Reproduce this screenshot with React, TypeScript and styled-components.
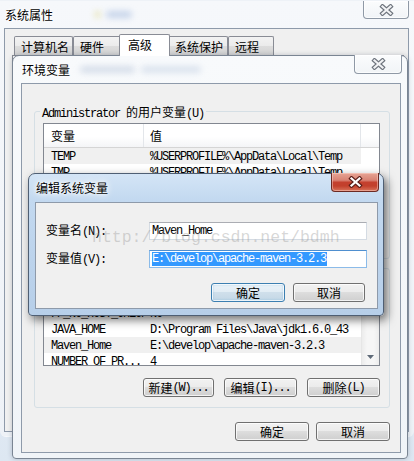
import React from "react";
import styled, { createGlobalStyle, css } from "styled-components";

const GlobalStyle = createGlobalStyle`
  html, body { margin: 0; padding: 0; }
  body {
    width: 414px; height: 461px; overflow: hidden;
    font-family: "Noto Sans CJK SC", "Liberation Sans", sans-serif;
    font-size: 12px; color: #000;
  }
`;

const Desktop = styled.div`
  position: relative;
  width: 414px;
  height: 461px;
  overflow: hidden;
  background: linear-gradient(180deg, #f4f7fa 0%, #e9eff6 60%, #dde7f2 100%);
`;

const Lat = styled.span`
  font-family: "Liberation Mono", monospace;
  font-size: 12px;
  letter-spacing: -1.2px;
`;

/* ---------- window chrome ---------- */

const Window = styled.div<{ $x: number; $y: number; $w: number; $h: number; $active?: boolean; $outer?: boolean }>`
  position: absolute;
  left: ${(p) => p.$x}px;
  top: ${(p) => p.$y}px;
  width: ${(p) => p.$w}px;
  height: ${(p) => p.$h}px;
  box-sizing: border-box;
  display: flex;
  flex-direction: column;
  border: 1px solid ${(p) => (p.$active ? "#4f5f74" : "#7a8593")};
  border-radius: 7px 7px 4px 4px;
  background: ${(p) =>
    p.$active
      ? "linear-gradient(180deg, #d4e5f6 0%, #c3d9f0 18%, #bcd3ec 60%, #b7cfe9 100%)"
      : "linear-gradient(180deg, #f8fafc 0%, #f0f4f8 100%)"};
  box-shadow: ${(p) =>
    p.$active ? "3px 4px 10px rgba(0,0,0,0.55)" : "0 0 5px rgba(40,50,70,0.25)"};
  ${(p) =>
    p.$outer &&
    css`
      border-color: transparent;
      border-radius: 0 0 6px 6px;
      box-shadow: none;
      background: linear-gradient(180deg, #f6f8fb 0%, #eef2f7 100%);
    `}
`;

const TitleBar = styled.div<{ $h: number; $pl: number }>`
  height: ${(p) => p.$h}px;
  flex: none;
  display: flex;
  align-items: center;
  padding-left: ${(p) => p.$pl}px;
`;

const Title = styled.span`
  font-size: 12px;
  line-height: 14px;
  color: #000;
  text-shadow: 0 0 6px #fff, 0 0 3px #fff, 0 0 10px rgba(255, 255, 255, 0.9);
  white-space: nowrap;
`;

const Smudge = styled.span<{ $w: number; $c: string; $ml: number }>`
  display: inline-block;
  width: ${(p) => p.$w}px;
  height: 7px;
  margin-left: ${(p) => p.$ml}px;
  border-radius: 5px;
  background: ${(p) => p.$c};
  opacity: 0.55;
  filter: blur(3px);
`;

const CloseBtn = styled.div<{ $red?: boolean; $w: number; $h: number; $mr: number; $mt: number }>`
  margin-left: auto;
  margin-right: ${(p) => p.$mr}px;
  margin-top: ${(p) => p.$mt}px;
  align-self: flex-start;
  width: ${(p) => p.$w}px;
  height: ${(p) => p.$h}px;
  box-sizing: border-box;
  border-radius: 0 0 4px 4px;
  display: flex;
  align-items: center;
  justify-content: center;
  border: 1px solid #8f99a6;
  border-top: none;
  background: linear-gradient(180deg, #fbfcfd 0%, #f1f4f7 100%);
  box-shadow: inset 0 0 0 1px rgba(255, 255, 255, 0.7);
  ${(p) =>
    p.$red &&
    css`
      border: 1px solid #6c2a23;
      border-top: none;
      background: linear-gradient(
        180deg,
        #e6a595 0%,
        #d98374 40%,
        #c4402e 52%,
        #c2402c 72%,
        #d8735a 100%
      );
      box-shadow: inset 0 0 0 1px rgba(255, 220, 210, 0.45);
    `}
`;

const CloseGlyph: React.FC<{ fill: string; stroke: string }> = ({ fill, stroke }) => (
  <svg width="15" height="12" viewBox="0 0 15 12">
    <path d="M3.5 2.5 L11.5 9.5 M11.5 2.5 L3.5 9.5" stroke={stroke} strokeWidth="4.4" strokeLinecap="square" fill="none" />
    <path d="M3.5 2.5 L11.5 9.5 M11.5 2.5 L3.5 9.5" stroke={fill} strokeWidth="2.2" strokeLinecap="square" fill="none" />
  </svg>
);

const Client = styled.div<{ $m: string }>`
  flex: 1;
  margin: ${(p) => p.$m};
  box-sizing: border-box;
  border: 1px solid #8e9aaa;
  background: #f0f0f0;
  display: flex;
  flex-direction: column;
  min-height: 0;
`;

/* ---------- tabs of the back window ---------- */

const TabStrip = styled.div`
  display: flex;
  align-items: flex-end;
  height: 21px;
  margin-top: 5px;
  padding-left: 9px;
  flex: none;
`;

const Tab = styled.div<{ $w: number; $sel?: boolean }>`
  box-sizing: border-box;
  width: ${(p) => p.$w}px;
  height: 19px;
  padding-left: 6px;
  display: flex;
  align-items: center;
  border: 1px solid #898c95;
  border-bottom: none;
  border-radius: 2px 2px 0 0;
  background: linear-gradient(180deg, #f3f3f3 0%, #ebebeb 50%, #dddddd 51%, #d3d3d3 100%);
  white-space: nowrap;
  ${(p) =>
    p.$sel &&
    css`
      height: 22px;
      margin: 0 -2px -1px -2px;
      padding-left: 8px;
      padding-bottom: 2px;
      background: #fff;
      position: relative;
      z-index: 1;
    `}
`;

const TabPanel = styled.div`
  flex: 1;
  margin: 0 4px 4px 7px;
  border: 1px solid #898c95;
  background: #fcfcfc;
`;

/* ---------- group box, list, buttons ---------- */

const Group = styled.div<{ $mt: number; $pb: number }>`
  position: relative;
  box-sizing: border-box;
  width: 356px;
  margin: ${(p) => p.$mt}px 0 0 12px;
  padding: 11px 9px ${(p) => p.$pb}px 8px;
  border: 1px solid #d5dfe5;
  border-radius: 3px;
  display: flex;
  flex-direction: column;
  flex: none;
`;

const GroupLabel = styled.span`
  position: absolute;
  left: 5px;
  top: -8px;
  padding: 0 2px;
  line-height: 15px;
  background: #f0f0f0;
  white-space: nowrap;
`;

const ListBox = styled.div<{ $h: number }>`
  box-sizing: border-box;
  height: ${(p) => p.$h}px;
  border: 1px solid #828790;
  background: #fff;
  display: flex;
  flex-direction: column;
  overflow: hidden;
  flex: none;
`;

const Header = styled.div`
  box-sizing: border-box;
  display: grid;
  grid-template-columns: 100px 217px 1fr;
  height: 24px;
  flex: none;
  background: linear-gradient(180deg, #ffffff 0%, #ffffff 55%, #f4f5f7 100%);
  border-bottom: 1px solid #d5d5d5;
`;

const HeadCell = styled.div<{ $pl: number; $last?: boolean }>`
  display: flex;
  align-items: center;
  padding-left: ${(p) => p.$pl}px;
  border-right: ${(p) => (p.$last ? "none" : "1px solid #e3e6ea")};
  white-space: nowrap;
`;

const ListBody = styled.div`
  flex: 1;
  display: flex;
  min-height: 0;
`;

const Rows = styled.div`
  flex: 1;
  overflow: hidden;
`;

const Row = styled.div<{ $sel?: boolean }>`
  display: grid;
  grid-template-columns: 100px 217px;
  width: 317px;
  height: 16px;
  align-items: center;
  background: ${(p) => (p.$sel ? "#f0f0f0" : "transparent")};
`;

const Cell = styled.div<{ $pl: number }>`
  padding-left: ${(p) => p.$pl}px;
  white-space: nowrap;
  overflow: hidden;
  font-family: "Liberation Mono", monospace;
  font-size: 12px;
  letter-spacing: -1.2px;
  line-height: 16px;
  padding-top: 1px;
`;

const VScroll = styled.div`
  box-sizing: border-box;
  width: 18px;
  flex: none;
  border-left: 1px solid #e6e6e6;
  background: linear-gradient(90deg, #ececec 0%, #f6f6f6 30%, #f6f6f6 70%, #ececec 100%);
  display: flex;
  flex-direction: column;
  justify-content: flex-end;
  align-items: center;
`;

const ArrowBox = styled.div`
  height: 16px;
  display: flex;
  align-items: center;
  justify-content: center;
`;

const ButtonRow = styled.div<{ $mt: number; $pr: number; $gap: number }>`
  display: flex;
  justify-content: flex-end;
  gap: ${(p) => p.$gap}px;
  margin-top: ${(p) => p.$mt}px;
  padding-right: ${(p) => p.$pr}px;
  flex: none;
`;

const Btn = styled.div<{ $w: number; $def?: boolean }>`
  box-sizing: border-box;
  width: ${(p) => p.$w}px;
  height: 19px;
  display: flex;
  align-items: center;
  justify-content: center;
  border: 1px solid #707070;
  border-radius: 3px;
  background: linear-gradient(180deg, #f2f2f2 0%, #ebebeb 49%, #dddddd 50%, #cfcfcf 100%);
  box-shadow: inset 0 0 0 1px rgba(255, 255, 255, 0.75);
  line-height: 14px;
  white-space: nowrap;
  ${(p) =>
    p.$def &&
    css`
      border-color: #3c7fb1;
      background: linear-gradient(180deg, #ebf3f9 0%, #e1ecf4 49%, #cfdfeb 50%, #c3d7e6 100%);
      box-shadow: inset 0 0 0 1px rgba(255, 255, 255, 0.8), inset 0 0 2px 1px rgba(60, 140, 210, 0.3);
    `}
`;

/* ---------- edit dialog ---------- */

const FormGrid = styled.div`
  display: grid;
  grid-template-columns: 103px 218px;
  row-gap: 8px;
  padding: 18px 0 0 10px;
  align-items: center;
`;

const FieldLabel = styled.div`
  white-space: nowrap;
  line-height: 18px;
`;

const Input = styled.div<{ $focus?: boolean }>`
  box-sizing: border-box;
  height: 18px;
  display: flex;
  align-items: center;
  padding-left: 2px;
  background: #fff;
  border: 1px solid ${(p) => (p.$focus ? "#8bbbe9" : "#d4dbe3")};
  border-top-color: ${(p) => (p.$focus ? "#4f8fcf" : "#abadb3")};
  white-space: nowrap;
  overflow: hidden;
`;

const Selected = styled.span`
  background: #3399ff;
  color: #fff;
  line-height: 14px;
  font-family: "Liberation Mono", monospace;
  font-size: 12px;
  letter-spacing: -1.2px;
  padding-right: 1.2px;
`;

const Watermark = styled.div`
  position: absolute;
  left: 92px;
  top: 229px;
  font-family: "Liberation Mono", monospace;
  font-size: 16.5px;
  line-height: 18px;
  color: rgba(150, 150, 150, 0.38);
  white-space: nowrap;
  pointer-events: none;
`;

const DownArrow = () => (
  <svg width="7" height="4" viewBox="0 0 7 4">
    <polygon points="0,0 7,0 3.5,4" fill="#5f6a78" />
  </svg>
);

type Item = { name: string; value: string; sel?: boolean };

const VarList: React.FC<{ h: number; items: Item[]; scroll?: boolean }> = ({ h, items, scroll }) => (
  <ListBox $h={h}>
    <Header>
      <HeadCell $pl={7}>变量</HeadCell>
      <HeadCell $pl={6}>值</HeadCell>
      <HeadCell $pl={0} $last />
    </Header>
    <ListBody>
      <Rows>
        {items.map((it) => (
          <Row key={it.name} $sel={it.sel}>
            <Cell $pl={7}>{it.name}</Cell>
            <Cell $pl={6}>{it.value}</Cell>
          </Row>
        ))}
      </Rows>
      {scroll && (
        <VScroll>
          <ArrowBox>
            <DownArrow />
          </ArrowBox>
        </VScroll>
      )}
    </ListBody>
  </ListBox>
);

const userVars: Item[] = [
  { name: "TEMP", value: "%USERPROFILE%\\AppData\\Local\\Temp", sel: true },
  { name: "TMP", value: "%USERPROFILE%\\AppData\\Local\\Temp" },
];

const sysVars: Item[] = [
  { name: "FP_NO_HOST_CHECK", value: "NO" },
  { name: "JAVA_HOME", value: "D:\\Program Files\\Java\\jdk1.6.0_43" },
  { name: "Maven_Home", value: "E:\\develop\\apache-maven-3.2.3", sel: true },
  { name: "NUMBER_OF_PR...", value: "4" },
];

export default function App() {
  return (
    <Desktop>
      <GlobalStyle />

      {/* 系统属性 */}
      <Window $x={0} $y={0} $w={414} $h={437} $outer>
        <TitleBar $h={27} $pl={4}>
          <Title>系统属性</Title>
          <Smudge $w={5} $c="#d8d070" $ml={42} />
          <Smudge $w={26} $c="#9fb6dc" $ml={6} />
          <CloseBtn $w={46} $h={18} $mr={4} $mt={0}>
            <CloseGlyph fill="#f2f3f5" stroke="#6d737c" />
          </CloseBtn>
        </TitleBar>
        <Client $m="0 4px 4px 3px">
          <TabStrip>
            <Tab $w={59}>计算机名</Tab>
            <Tab $w={48}>硬件</Tab>
            <Tab $w={51} $sel>
              高级
            </Tab>
            <Tab $w={60}>系统保护</Tab>
            <Tab $w={46}>远程</Tab>
          </TabStrip>
          <TabPanel />
        </Client>
      </Window>

      {/* 环境变量 */}
      <Window $x={12} $y={55} $w={396} $h={404}>
        <TitleBar $h={27} $pl={9}>
          <Title>环境变量</Title>
          <Smudge $w={55} $c="#b9c6da" $ml={10} />
          <Smudge $w={60} $c="#c2cfe2" $ml={6} />
          <CloseBtn $w={48} $h={19} $mr={5} $mt={-1}>
            <CloseGlyph fill="#f2f3f5" stroke="#6d737c" />
          </CloseBtn>
        </TitleBar>
        <Client $m="0 6px 5px 8px">
          <Group $mt={27} $pb={10}>
            <GroupLabel>
              <Lat>Administrator </Lat>的用户变量<Lat>(U)</Lat>
            </GroupLabel>
            <VarList h={94} items={userVars} />
            <ButtonRow $mt={12} $pr={0} $gap={10}>
              <Btn $w={71}>
                新建<Lat>(N)...</Lat>
              </Btn>
              <Btn $w={73}>
                编辑<Lat>(E)...</Lat>
              </Btn>
              <Btn $w={73}>
                删除<Lat>(D)</Lat>
              </Btn>
            </ButtonRow>
          </Group>
          <Group $mt={9} $pb={10}>
            <GroupLabel>
              系统变量<Lat>(S)</Lat>
            </GroupLabel>
            <VarList h={86} items={sysVars} scroll />
            <ButtonRow $mt={12} $pr={0} $gap={10}>
              <Btn $w={71}>
                新建<Lat>(W)...</Lat>
              </Btn>
              <Btn $w={73}>
                编辑<Lat>(I)...</Lat>
              </Btn>
              <Btn $w={73}>
                删除<Lat>(L)</Lat>
              </Btn>
            </ButtonRow>
          </Group>
          <ButtonRow $mt={14} $pr={10} $gap={7}>
            <Btn $w={74}>确定</Btn>
            <Btn $w={74}>取消</Btn>
          </ButtonRow>
        </Client>
      </Window>

      {/* 编辑系统变量 */}
      <Window $x={28} $y={173} $w={356} $h={143} $active>
        <TitleBar $h={28} $pl={7}>
          <Title>编辑系统变量</Title>
          <CloseBtn $red $w={48} $h={19} $mr={4} $mt={-1}>
            <CloseGlyph fill="#ffffff" stroke="#5a1f1a" />
          </CloseBtn>
        </TitleBar>
        <Client $m="0 5px 6px 6px">
          <FormGrid>
            <FieldLabel>
              变量名<Lat>(N):</Lat>
            </FieldLabel>
            <Input>
              <Lat>Maven_Home</Lat>
            </Input>
            <FieldLabel>
              变量值<Lat>(V):</Lat>
            </FieldLabel>
            <Input $focus>
              <Selected>E:\develop\apache-maven-3.2.3</Selected>
            </Input>
          </FormGrid>
          <ButtonRow $mt={14} $pr={12} $gap={8}>
            <Btn $w={74} $def>
              确定
            </Btn>
            <Btn $w={72}>取消</Btn>
          </ButtonRow>
        </Client>
      </Window>

      <Watermark>http://blog.csdn.net/bdmh</Watermark>
    </Desktop>
  );
}
